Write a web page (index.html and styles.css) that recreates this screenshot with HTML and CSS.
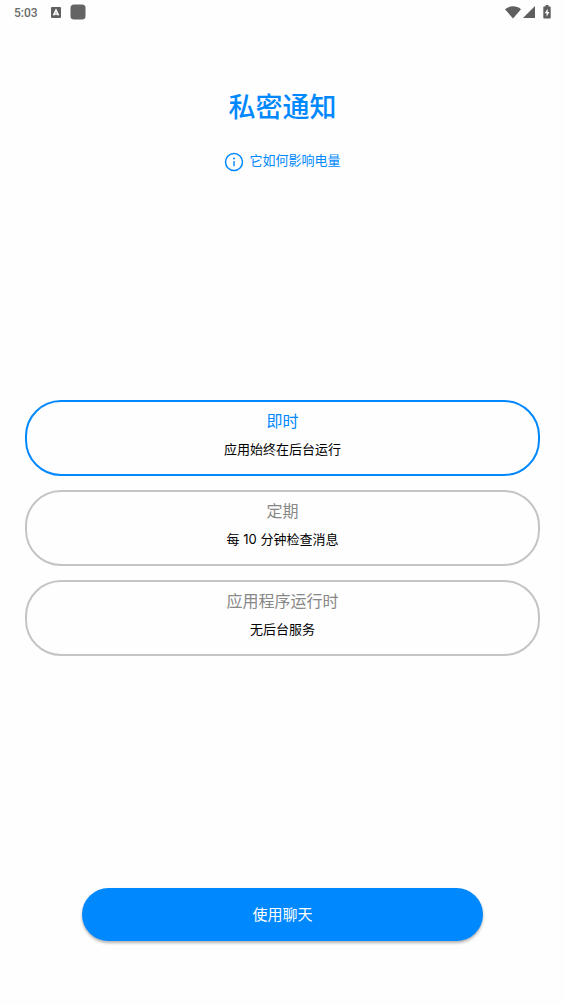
FILE: index.html
```html
<!DOCTYPE html>
<html lang="zh-CN">
<head>
<meta charset="utf-8">
<meta name="viewport" content="width=device-width, initial-scale=1">
<title>私密通知</title>
<link rel="stylesheet" href="styles.css">
</head>
<body>
<div class="status-bar">
  <div class="status-left">
    <span class="clock">5:03</span>
    <svg class="keyboard-icon" width="10" height="11" viewBox="0 0 10 11" aria-hidden="true"><rect width="10" height="11" rx="1" fill="#5f5f5f"/><path d="M2.5 8.4 5 3l2.500 5.400M3.600 7h2.800" fill="none" stroke="#fff" stroke-width="1.500"/></svg>
    <svg width="16" height="16" viewBox="0 0 16 16" aria-hidden="true"><rect x=".5" y=".5" width="15" height="15" rx="3.5" fill="#646464"/></svg>
  </div>
  <div class="status-right">
    <svg width="16" height="13" viewBox="0 0 16 13" aria-hidden="true"><path d="M0 3.2C4.6-.6 11.400-.6 16 3.200L8 12.600Z" fill="#5f5f5f"/></svg>
    <svg width="12" height="12" viewBox="0 0 12 12" aria-hidden="true"><path d="M12 0v12H0Z" fill="#5f5f5f"/></svg>
    <svg class="battery-icon" width="8" height="14" viewBox="0 0 8 14" aria-hidden="true"><path d="M2.500 0h3v1.500H7q.7 0 .7.700v10.600q0 .7-.7.700H1q-.7 0-.7-.7V2.200q0-.7.7-.7h1.500Z" fill="#5f5f5f"/><path d="M4.700 3.800 1.700 8.300h1.900v3.400L6.400 7H4.700Z" fill="#fff"/></svg>
  </div>
</div>
<main class="screen">
  <h1 class="title">私密通知</h1>
  <button class="info-link" type="button">
    <svg width="20" height="20" viewBox="0 0 20 20" aria-hidden="true"><circle cx="10" cy="10" r="8.500" fill="none" stroke="#0088ff" stroke-width="1.500"/><path d="M10 9v5.200" stroke="#0088ff" stroke-width="1.400"/><circle cx="10" cy="6.500" r="1" fill="#0088ff"/></svg>
    <span class="info-text">它如何影响电量</span>
  </button>
  <form class="options">
    <label class="option">
      <input class="option-input" type="radio" name="mode" checked>
      <span class="option-name">即时</span>
      <span class="option-note">应用始终在后台运行</span>
    </label>
    <label class="option">
      <input class="option-input" type="radio" name="mode">
      <span class="option-name">定期</span>
      <span class="option-note">每 10 分钟检查消息</span>
    </label>
    <label class="option">
      <input class="option-input" type="radio" name="mode">
      <span class="option-name">应用程序运行时</span>
      <span class="option-note">无后台服务</span>
    </label>
  </form>
  <button class="primary" type="button">使用聊天</button>
</main>
</body>
</html>
```
FILE: styles.css
```css
* {
  box-sizing: border-box;
}

body {
  margin: 0;
  min-height: 100vh;
  display: flex;
  flex-direction: column;
  background: #fefefe;
  color: #000;
  font-family: Inter, "Noto Sans CJK SC", sans-serif;
}

button {
  border: 0;
  font: inherit;
  cursor: pointer;
}

.status-bar {
  height: 24px;
  padding: 0 14px;
  display: flex;
  align-items: center;
  justify-content: space-between;
}

.status-left,
.status-right {
  display: flex;
  align-items: center;
}

.clock {
  padding-top: 1px;
  color: #6a6a6a;
  font: 500 12px/24px Roboto, sans-serif;
}

.keyboard-icon {
  margin: 0 9px 0 13px;
}

.status-right {
  gap: 2px;
}

.battery-icon {
  margin-left: 6px;
}

.screen {
  flex: 1;
  display: flex;
  flex-direction: column;
  align-items: center;
  padding: 64px 25px;
}

.title {
  margin: 0;
  color: #0088ff;
  font-size: 27px;
  line-height: 40px;
  font-weight: 500;
}

.info-link {
  display: flex;
  align-items: center;
  gap: 5px;
  margin-top: 20px;
  padding: 0;
  background: none;
  color: #0088ff;
  font-size: 13px;
  line-height: 20px;
}

.info-link svg {
  margin-top: 4px;
}

.options {
  flex: 1;
  width: 100%;
  display: flex;
  flex-direction: column;
  justify-content: center;
  gap: 14px;
  padding-bottom: 5px;
}

.option {
  position: relative;
  display: flex;
  flex-direction: column;
  align-items: center;
  gap: 5px;
  padding: 7px 32px 14px;
  border: 2px solid #c4c4c4;
  border-radius: 36px;
  text-align: center;
  cursor: pointer;
}

.option:has(.option-input:checked) {
  border-color: #0088ff;
}

.option-input {
  position: absolute;
  inset: 0;
  margin: 0;
  opacity: 0;
  cursor: pointer;
}

.option-name {
  color: #888;
  font-size: 16px;
  line-height: 24px;
}

.option-input:checked + .option-name {
  color: #0088ff;
}

.option-note {
  font-size: 13px;
  line-height: 22px;
}

.primary {
  width: 78%;
  padding: 15px 24px 14px;
  border-radius: 27px;
  background: #0088ff;
  box-shadow: 0 2px 3px rgba(0, 0, 0, 0.3);
  color: #fff;
  font-size: 15px;
  line-height: 24px;
}
```
